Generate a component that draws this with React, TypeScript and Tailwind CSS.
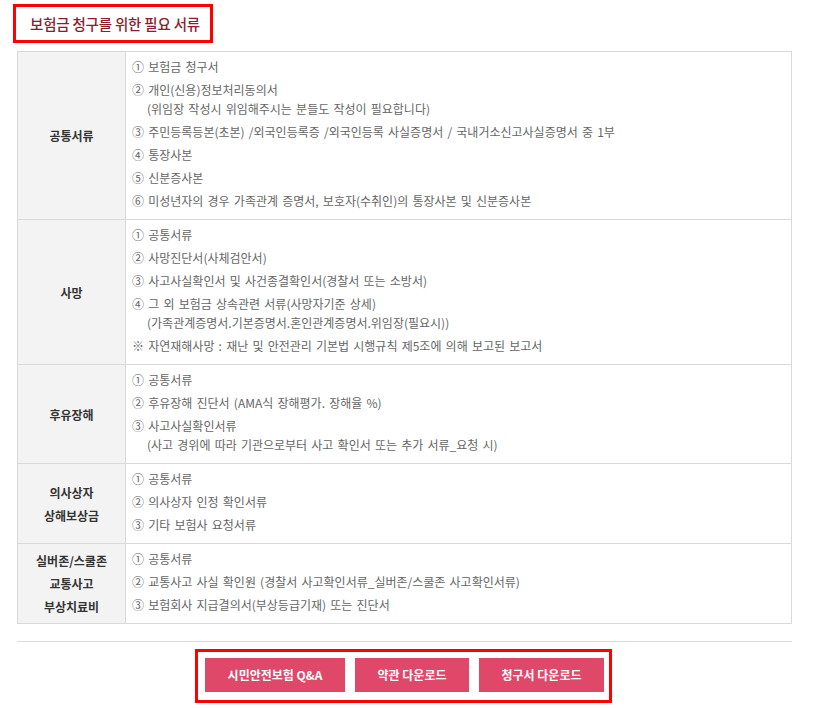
const sections: { label: string[]; items: { text: string; sub?: string }[] }[] = [
  {
    label: ['공통서류'],
    items: [
      { text: '① 보험금 청구서' },
      { text: '② 개인(신용)정보처리동의서', sub: '(위임장 작성시 위임해주시는 분들도 작성이 필요합니다)' },
      { text: '③ 주민등록등본(초본) /외국인등록증 /외국인등록 사실증명서 / 국내거소신고사실증명서 중 1부' },
      { text: '④ 통장사본' },
      { text: '⑤ 신분증사본' },
      { text: '⑥ 미성년자의 경우 가족관계 증명서, 보호자(수취인)의 통장사본 및 신분증사본' },
    ],
  },
  {
    label: ['사망'],
    items: [
      { text: '① 공통서류' },
      { text: '② 사망진단서(사체검안서)' },
      { text: '③ 사고사실확인서 및 사건종결확인서(경찰서 또는 소방서)' },
      { text: '④ 그 외 보험금 상속관련 서류(사망자기준 상세)', sub: '(가족관계증명서.기본증명서.혼인관계증명서.위임장(필요시))' },
      { text: '※ 자연재해사망 : 재난 및 안전관리 기본법 시행규칙 제5조에 의해 보고된 보고서' },
    ],
  },
  {
    label: ['후유장해'],
    items: [
      { text: '① 공통서류' },
      { text: '② 후유장해 진단서 (AMA식 장해평가. 장해율 %)' },
      { text: '③ 사고사실확인서류', sub: '(사고 경위에 따라 기관으로부터 사고 확인서 또는 추가 서류_요청 시)' },
    ],
  },
  {
    label: ['의사상자', '상해보상금'],
    items: [
      { text: '① 공통서류' },
      { text: '② 의사상자 인정 확인서류' },
      { text: '③ 기타 보험사 요청서류' },
    ],
  },
  {
    label: ['실버존/스쿨존', '교통사고', '부상치료비'],
    items: [
      { text: '① 공통서류' },
      { text: '② 교통사고 사실 확인원 (경찰서 사고확인서류_실버존/스쿨존 사고확인서류)' },
      { text: '③ 보험회사 지급결의서(부상등급기재) 또는 진단서' },
    ],
  },
];

export default function App() {
  return (
    <div className="w-[817px] h-[708px] bg-white font-['Noto_Sans_CJK_KR',sans-serif] overflow-hidden">
      {/* Title */}
      <div className="pt-[4px] pl-[13px]">
        <div className="inline-flex items-center h-[39px] w-[200px] border-[3px] border-[#ff0000] pl-[14px]">
          <h3 className="text-[14.5px] text-[#8c1d2e] font-medium tracking-[-0.2px]">보험금 청구를 위한 필요 서류</h3>
        </div>
      </div>

      {/* Table */}
      <table className="ml-[17px] mt-[8px] w-[775px] border-collapse text-[12px]">
        <tbody>
          {sections.map((s, i) => (
            <tr key={i}>
              <th className="w-[108px] bg-[#f3f3f3] border border-[#d9d9d9] text-[#333] font-bold leading-[23px] align-middle">
                {s.label.map((l) => (
                  <div key={l}>{l}</div>
                ))}
              </th>
              <td className="border border-[#d9d9d9] pl-[6px] pt-[5px] pb-[5px] text-[#666] align-top [word-spacing:1.5px]">
                <ul>
                  {s.items.map((it, j) => (
                    <li key={it.text} className={`leading-[19px] ${i === 0 && j === 0 ? 'mb-[4px]' : 'mb-[4px]'}`}>
                      <div>{it.text}</div>
                      {it.sub && <div className="pl-[15px]">{it.sub}</div>}
                    </li>
                  ))}
                </ul>
              </td>
            </tr>
          ))}
        </tbody>
      </table>

      {/* Divider */}
      <div className="ml-[17px] mt-[17px] w-[775px] border-t border-[#dcdcdc]" />

      {/* Buttons */}
      <div className="flex justify-center mt-[7px] pr-[10px]">
        <div className="flex gap-[10px] border-[3px] border-[#ff0000] pl-[7px] pr-[5px] pt-[6px] pb-[8px]">
          <button className="h-[34px] w-[140px] bg-[#e0486a] text-white text-[12px] font-bold">시민안전보험 Q&amp;A</button>
          <button className="h-[34px] w-[114px] bg-[#e0486a] text-white text-[12px] font-bold">약관 다운로드</button>
          <button className="h-[34px] w-[125px] bg-[#e0486a] text-white text-[12px] font-bold">청구서 다운로드</button>
        </div>
      </div>
    </div>
  );
}
